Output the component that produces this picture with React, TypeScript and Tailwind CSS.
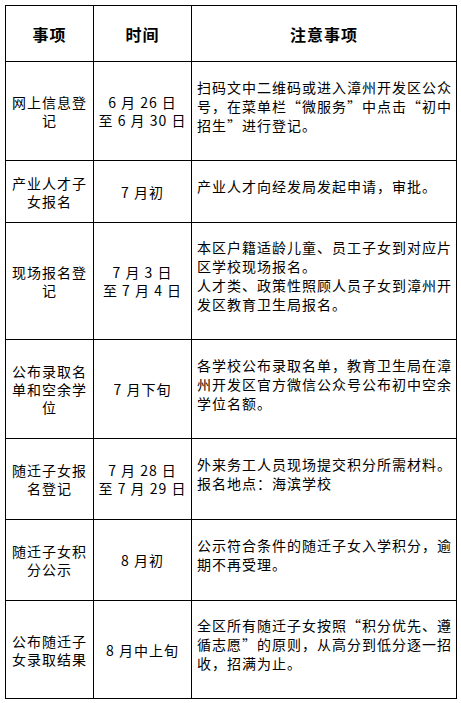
const rows = [
  {
    item: ["网上信息登", "记"],
    time: ["6 月 26 日", "至 6 月 30 日"],
    note: ["扫码文中二维码或进入漳州开发区公众", "号，在菜单栏“微服务”中点击“初中", "招生”进行登记。"],
    h: "h-[99px]",
  },
  {
    item: ["产业人才子", "女报名"],
    time: ["7 月初"],
    note: ["产业人才向经发局发起申请，审批。"],
    h: "h-[62px]",
  },
  {
    item: ["现场报名登", "记"],
    time: ["7 月 3 日", "至 7 月 4 日"],
    note: ["本区户籍适龄儿童、员工子女到对应片", "区学校现场报名。", "人才类、政策性照顾人员子女到漳州开", "发区教育卫生局报名。"],
    h: "h-[117px]",
  },
  {
    item: ["公布录取名", "单和空余学", "位"],
    time: ["7 月下旬"],
    note: ["各学校公布录取名单，教育卫生局在漳", "州开发区官方微信公众号公布初中空余", "学位名额。"],
    h: "h-[99px]",
  },
  {
    item: ["随迁子女报", "名登记"],
    time: ["7 月 28 日", "至 7 月 29 日"],
    note: ["外来务工人员现场提交积分所需材料。", "报名地点：海滨学校"],
    h: "h-[81px]",
  },
  {
    item: ["随迁子女积", "分公示"],
    time: ["8 月初"],
    note: ["公示符合条件的随迁子女入学积分，逾", "期不再受理。"],
    h: "h-[81px]",
  },
  {
    item: ["公布随迁子", "女录取结果"],
    time: ["8 月中上旬"],
    note: ["全区所有随迁子女按照“积分优先、遵", "循志愿”的原则，从高分到低分逐一招", "收，招满为止。"],
    h: "h-[98px]",
  },
];

const Lines = ({ lines }: { lines: string[] }) => (
  <>
    {lines.map((l, i) => (
      <span key={i} className="block whitespace-nowrap">
        {l}
      </span>
    ))}
  </>
);

export default function App() {
  return (
    <div
      className="w-[461px] h-[703px] bg-white pl-[5px] pt-[5px] text-black"
      style={{ fontFamily: '"Noto Sans CJK SC", "Liberation Sans", sans-serif' }}
    >
      <table className="border-collapse table-fixed w-[451px]">
        <colgroup>
          <col className="w-[88px]" />
          <col className="w-[98px]" />
          <col className="w-[265px]" />
        </colgroup>
        <thead>
          <tr className="h-[56px]">
            {["事项", "时间", "注意事项"].map((t) => (
              <th
                key={t}
                className="border border-black text-center align-middle text-[16px] font-bold tracking-[1px] p-0"
              >
                {t}
              </th>
            ))}
          </tr>
        </thead>
        <tbody>
          {rows.map((r, i) => (
            <tr key={i} className={r.h}>
              <td className="border border-black text-center align-middle text-[14px] leading-[18px] tracking-[1px] p-0">
                <Lines lines={r.item} />
              </td>
              <td className="border border-black text-center align-middle text-[14px] leading-[18px] tracking-[1px] p-0">
                <Lines lines={r.time} />
              </td>
              <td className="border border-black text-left align-middle text-[14px] leading-[19px] tracking-[1px] pl-[5px] pr-[1px] pt-0 pb-[10px]">
                <Lines lines={r.note} />
              </td>
            </tr>
          ))}
        </tbody>
      </table>
    </div>
  );
}
